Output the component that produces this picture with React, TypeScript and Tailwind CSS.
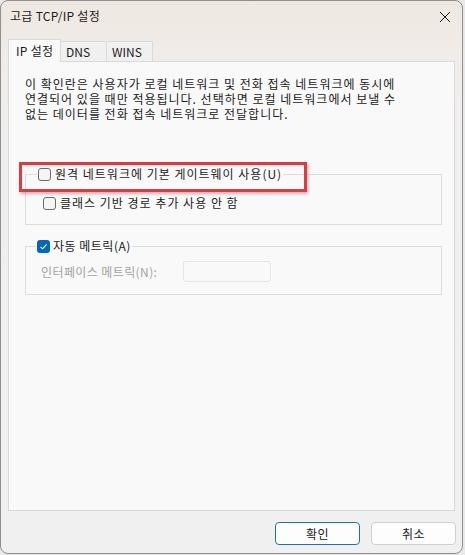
import React from 'react';

const font = { fontFamily: '"Noto Sans CJK KR", "Noto Sans", sans-serif' };

function Check({ checked = false }: { checked?: boolean }) {
  if (checked) {
    return (
      <span className="inline-flex h-[13px] w-[13px] shrink-0 items-center justify-center rounded-[3px] bg-[#0067c0]">
        <svg width="9" height="9" viewBox="0 0 9 9">
          <path d="M1.5 4.8 L3.6 6.8 L7.6 2.4" fill="none" stroke="#ffffff" strokeWidth="1.1" />
        </svg>
      </span>
    );
  }
  return <span className="inline-block h-[13px] w-[13px] shrink-0 rounded-[3px] border border-[#6b6b6b] bg-[#f5f5f5]" />;
}

const tabs = [
  { label: 'IP 설정', active: true, w: 'w-[53px]' },
  { label: 'DNS', active: false, w: 'w-[46px]' },
  { label: 'WINS', active: false, w: 'w-[46px]' },
];

export default function App() {
  return (
    <div className="h-[555px] w-[465px] bg-[#e9e9e9] text-[12px] text-[#1b1b1b]" style={font}>
      <div className="relative flex h-[554px] w-[463px] flex-col overflow-hidden rounded-lg border border-[#8f8f8f] bg-gradient-to-b from-[#efe8e2] via-[#f0efee] via-20% to-[#f0f0f0]">
        {/* title bar */}
        <div className="flex h-[30px] shrink-0 items-center justify-between pl-[9px] pr-[8px]">
          <span className="text-[12px] tracking-[0.3px]">고급 TCP/IP 설정</span>
          <svg width="12" height="12" viewBox="0 0 12 12" className="mr-[3px] mt-[1px]">
            <path d="M1 1 L11 11 M11 1 L1 11" stroke="#1b1b1b" strokeWidth="1" />
          </svg>
        </div>

        {/* tabs */}
        <div className="mt-[8px] flex items-end pl-[7px]">
          {tabs.map((t) =>
            t.active ? (
              <div
                key={t.label}
                className={`relative z-10 -mb-px flex h-[23px] ${t.w} items-center border border-b-0 border-[#d9d9d9] bg-[#f9f9f9] pl-[7px] tracking-[0.3px]`}
              >
                {t.label}
              </div>
            ) : (
              <div
                key={t.label}
                className={`flex h-[20px] ${t.w} items-center border border-b-0 border-l-0 border-[#d9d9d9] bg-[#f0f0f0] pl-[5px]`}
              >
                {t.label}
              </div>
            )
          )}
        </div>

        {/* tab panel */}
        <div className="ml-[7px] flex h-[450px] w-[447px] flex-col border border-[#d9d9d9] bg-[#f9f9f9] pl-[16px] pr-[12px] pt-[14px]">
          <p className="leading-[15px] tracking-[1px]">
            이 확인란은 사용자가 로컬 네트워크 및 전화 접속 네트워크에 동시에
            <br />
            연결되어 있을 때만 적용됩니다. 선택하면 로컬 네트워크에서 보낼 수
            <br />
            없는 데이터를 전화 접속 네트워크로 전달합니다.
          </p>

          <fieldset className="mt-[45px] w-[417px] border border-[#dcdcdc] pb-[13px]">
            <legend className="ml-[11px] flex h-[16px] items-center gap-[4px] px-[1px]">
              <Check />
              <span className="tracking-[1px]">원격 네트워크에 기본 게이트웨이 사용(U)</span>
            </legend>
            <div className="ml-[17px] mt-[13px] flex h-[16px] items-center gap-[4px]">
              <Check />
              <span className="tracking-[1px]">클래스 기반 경로 추가 사용 안 함</span>
            </div>
          </fieldset>

          <fieldset className="mt-[13px] w-[417px] border border-[#dcdcdc] pb-[12px]">
            <legend className="ml-[10px] flex h-[16px] items-center gap-[3px] px-[1px]">
              <Check checked />
              <span className="tracking-[0.5px]">자동 메트릭(A)</span>
            </legend>
            <div className="ml-[15px] mt-[7px] flex items-center">
              <span className="w-[142px] tracking-[0.4px] text-[#a3a3a3]">인터페이스 메트릭(N):</span>
              <div className="h-[21px] w-[88px] rounded-[3px] border border-[#e6e6e6] bg-[#f9f9f9]" />
            </div>
          </fieldset>
        </div>

        {/* buttons */}
        <div className="mt-[11px] flex justify-end gap-[11px] pr-[6px]">
          <button className="h-[23px] w-[85px] rounded-[4px] border border-[#1f6fb6] bg-[#fdfdfd] tracking-[0.5px] shadow-[inset_0_0_0_1px_#ffffff]">
            확인
          </button>
          <button className="h-[23px] w-[85px] rounded-[4px] border border-[#d0d0d0] bg-[#fdfdfd] tracking-[0.5px]">
            취소
          </button>
        </div>

        {/* red annotation box */}
        <div className="pointer-events-none absolute left-[18px] top-[161px] h-[30px] w-[288px] border-[3px] border-[#e0393e] shadow-[1px_2px_3px_rgba(0,0,0,0.25)]" />
      </div>
    </div>
  );
}
